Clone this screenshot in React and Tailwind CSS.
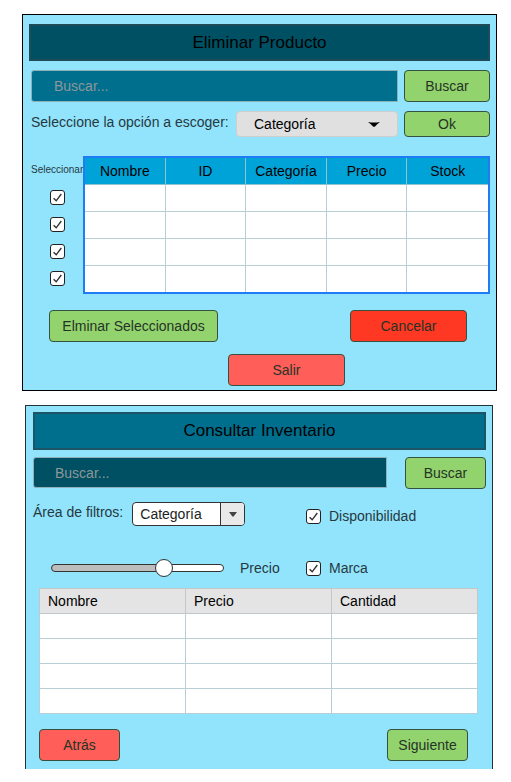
import { useState } from "react";

const tones = {
  green: "bg-[#92d36e]",
  red: "bg-[#ff3823]",
  salmon: "bg-[#ff5f58]",
};

function Button({ tone = "green", className = "", children }) {
  return (
    <button
      type="button"
      className={`h-8 shrink-0 rounded-[4px] border border-[#33523f] text-center text-[#263326] ${tones[tone]} ${className}`}
    >
      {children}
    </button>
  );
}

function Checkbox({ id, label }) {
  return (
    <span className="relative block size-[15px] shrink-0">
      <input
        id={id}
        type="checkbox"
        defaultChecked
        aria-label={label}
        className="peer block size-[15px] appearance-none rounded-[3px] border border-[#222222] bg-white"
      />
      <svg
        viewBox="0 0 15 15"
        className="pointer-events-none absolute inset-0 hidden size-[15px] peer-checked:block"
        fill="none"
        stroke="#333333"
        strokeWidth="1.4"
      >
        <path d="M3.600 8.200 L6.200 10.800 L11.300 4" />
      </svg>
    </span>
  );
}

function EliminarProducto() {
  const columns = ["Nombre", "ID", "Categoría", "Precio", "Stock"];
  const rows = [1, 2, 3, 4];
  return (
    <section className="mr-[14px] ml-[22px] border border-black bg-[#92e4fc] px-[6px] pt-[9px] pb-1">
      <h1 className="flex h-[37px] items-center justify-center border-2 border-[#1f4a57] bg-[#005064] text-[17px] text-black">
        Eliminar Producto
      </h1>
      <div className="pl-[2px]">
        <div className="mt-[9px] flex gap-[6px]">
          <input
            type="text"
            aria-label="Buscar producto"
            placeholder="Buscar..."
            className="h-8 min-w-0 flex-1 rounded-l-[3px] border border-[#8fb0b8] bg-[#006f8e] px-[22px] text-white placeholder:text-[#8e9698]"
          />
          <Button className="w-[86px]">Buscar</Button>
        </div>

        <div className="mt-[9px] flex items-center gap-[6px]">
          <label htmlFor="opcion" className="mb-1 flex-1 whitespace-nowrap text-[#26393f]">
            Seleccione la opción a escoger:
          </label>
          <div className="relative w-[162px]">
            <select
              id="opcion"
              className="block h-[26px] w-full appearance-none rounded-[4px] border border-[#cfcfcf] bg-[#e0e0e0] pl-[17px] text-black"
            >
              <option>Categoría</option>
            </select>
            <svg
              viewBox="0 0 12 5"
              className="pointer-events-none absolute top-[11px] right-[18px] h-[5px] w-3"
              fill="#000000"
            >
              <path d="M0 0 Q6 1 12 0 Q8.500 2.500 7 4.500 Q6 5 5 4.500 Q3.500 2.500 0 0 Z" />
            </svg>
          </div>
          <Button className="h-[26px]! w-[86px]">Ok</Button>
        </div>

        <div className="mt-[19px] flex">
          <div className="w-[52px] shrink-0">
            <div className="flex h-7 items-center whitespace-nowrap text-[10px] text-[#26393f]">
              Seleccionar
            </div>
            {rows.map((row) => (
              <div key={row} className="flex h-[27px] items-center justify-center">
                <Checkbox label={`Seleccionar fila ${row}`} />
              </div>
            ))}
          </div>
          <div className="flex-1 border-2 border-[#1f7cf5]">
            <table className="w-full table-fixed border-separate border-spacing-0 bg-white text-center text-black">
              <thead>
                <tr className="h-[27px]">
                  {columns.map((name) => (
                    <th
                      key={name}
                      className="border-r border-b border-[#8fc3d4] bg-[#00a3d7] p-0 font-normal last:border-r-0"
                    >
                      {name}
                    </th>
                  ))}
                </tr>
              </thead>
              <tbody>
                {rows.map((row) => (
                  <tr key={row} className="group h-[27px] last:h-[26px]">
                    {columns.map((name) => (
                      <td
                        key={name}
                        className="border-r border-b border-[#b9ced5] p-0 group-last:border-b-0 last:border-r-0"
                      />
                    ))}
                  </tr>
                ))}
              </tbody>
            </table>
          </div>
        </div>

        <div className="mt-4 flex justify-between pr-[23px] pl-[18px]">
          <Button className="w-[169px]">Elminar Seleccionados</Button>
          <Button tone="red" className="w-[117px]">
            Cancelar
          </Button>
        </div>
        <div className="mt-3 flex justify-center pl-[52px]">
          <Button tone="salmon" className="w-[117px]">
            Salir
          </Button>
        </div>
      </div>
    </section>
  );
}

function ConsultarInventario() {
  const columns = ["Nombre", "Precio", "Cantidad"];
  const [price, setPrice] = useState(67);
  return (
    <section className="mt-[14px] mr-[18px] ml-[25px] border border-b-0 border-[#22333a] bg-[#92e4fc] px-[6px] pt-[6px] pb-2">
      <h2 className="ml-px flex h-[38px] items-center justify-center border-2 border-[#1c5468] bg-[#006f8e] text-[17px] text-black">
        Consultar Inventario
      </h2>
      <div className="mt-[7px] ml-px flex justify-between">
        <input
          type="text"
          aria-label="Buscar en inventario"
          placeholder="Buscar..."
          className="mr-[18px] h-[31px] min-w-0 flex-1 rounded-l-[3px] border border-[#8fb0b8] bg-[#005064] px-[21px] text-white placeholder:text-[#8e9698]"
        />
        <Button className="w-[81px]">Buscar</Button>
      </div>

      <div className="mt-[13px] ml-px flex items-start">
        <div className="flex flex-1 items-start gap-[9px]">
          <label htmlFor="filtro" className="whitespace-nowrap text-[#26393f]">
            Área de filtros:
          </label>
          <div className="relative w-[113px]">
            <select
              id="filtro"
              className="block h-6 w-full appearance-none rounded-[4px] border border-[#333333] bg-white pl-[7px] text-[#222222]"
            >
              <option>Categoría</option>
            </select>
            <span className="pointer-events-none absolute inset-y-px right-px flex w-6 items-center justify-center rounded-r-[3px] border-l border-[#333333] bg-[#e9e9e9]">
              <svg viewBox="0 0 8 5" className="h-[5px] w-2" fill="#444444">
                <path d="M0 0 H8 L4.600 4.600 H3.400 Z" />
              </svg>
            </span>
          </div>
        </div>
        <div className="mt-1 flex w-[180px] items-center gap-2">
          <Checkbox id="disponibilidad" />
          <label htmlFor="disponibilidad" className="text-[#26393f]">
            Disponibilidad
          </label>
        </div>
      </div>

      <div className="mt-[32px] ml-px flex items-center">
        <div className="flex flex-1 items-center gap-4 pl-[18px]">
          <input
            id="precio"
            type="range"
            min="0"
            max="100"
            value={price}
            onChange={(event) => setPrice(Number(event.target.value))}
            style={{ "--fill": `${price}%` }}
            className="block h-[18px] w-[173px] appearance-none bg-transparent [&::-webkit-slider-runnable-track]:h-2 [&::-webkit-slider-runnable-track]:rounded-full [&::-webkit-slider-runnable-track]:border [&::-webkit-slider-runnable-track]:border-[#333333] [&::-webkit-slider-runnable-track]:bg-[linear-gradient(to_right,#bdbdbd_var(--fill),#ffffff_var(--fill))] [&::-webkit-slider-thumb]:-mt-[6px] [&::-webkit-slider-thumb]:size-[18px] [&::-webkit-slider-thumb]:appearance-none [&::-webkit-slider-thumb]:rounded-full [&::-webkit-slider-thumb]:border [&::-webkit-slider-thumb]:border-[#333333] [&::-webkit-slider-thumb]:bg-white"
          />
          <label htmlFor="precio" className="text-[#26393f]">
            Precio
          </label>
        </div>
        <div className="flex w-[180px] items-center gap-2">
          <Checkbox id="marca" />
          <label htmlFor="marca" className="text-[#26393f]">
            Marca
          </label>
        </div>
      </div>

      <div className="mt-[10px] pr-2 pl-[7px]">
        <table className="w-full table-fixed border-collapse bg-white text-left text-black">
          <thead>
            <tr className="h-[25px] bg-[#e4e4e4]">
              {columns.map((name) => (
                <th key={name} className="border border-[#c0c8cb] py-0 pr-0 pl-2 font-normal">
                  {name}
                </th>
              ))}
            </tr>
          </thead>
          <tbody>
            {[1, 2, 3, 4].map((row) => (
              <tr key={row} className="h-[25px]">
                {columns.map((name) => (
                  <td key={name} className="border border-[#b9ced5] p-0" />
                ))}
              </tr>
            ))}
          </tbody>
        </table>
        <div className="mt-[15px] flex justify-between pr-[10px]">
          <Button tone="salmon" className="w-[81px]">
            Atrás
          </Button>
          <Button className="w-[81px]">Siguiente</Button>
        </div>
      </div>
    </section>
  );
}

export default function App() {
  return (
    <main className="min-h-screen bg-white pt-[14px] pb-3 font-['Liberation_Sans',Arial,sans-serif] text-[14px] leading-5">
      <EliminarProducto />
      <ConsultarInventario />
    </main>
  );
}
